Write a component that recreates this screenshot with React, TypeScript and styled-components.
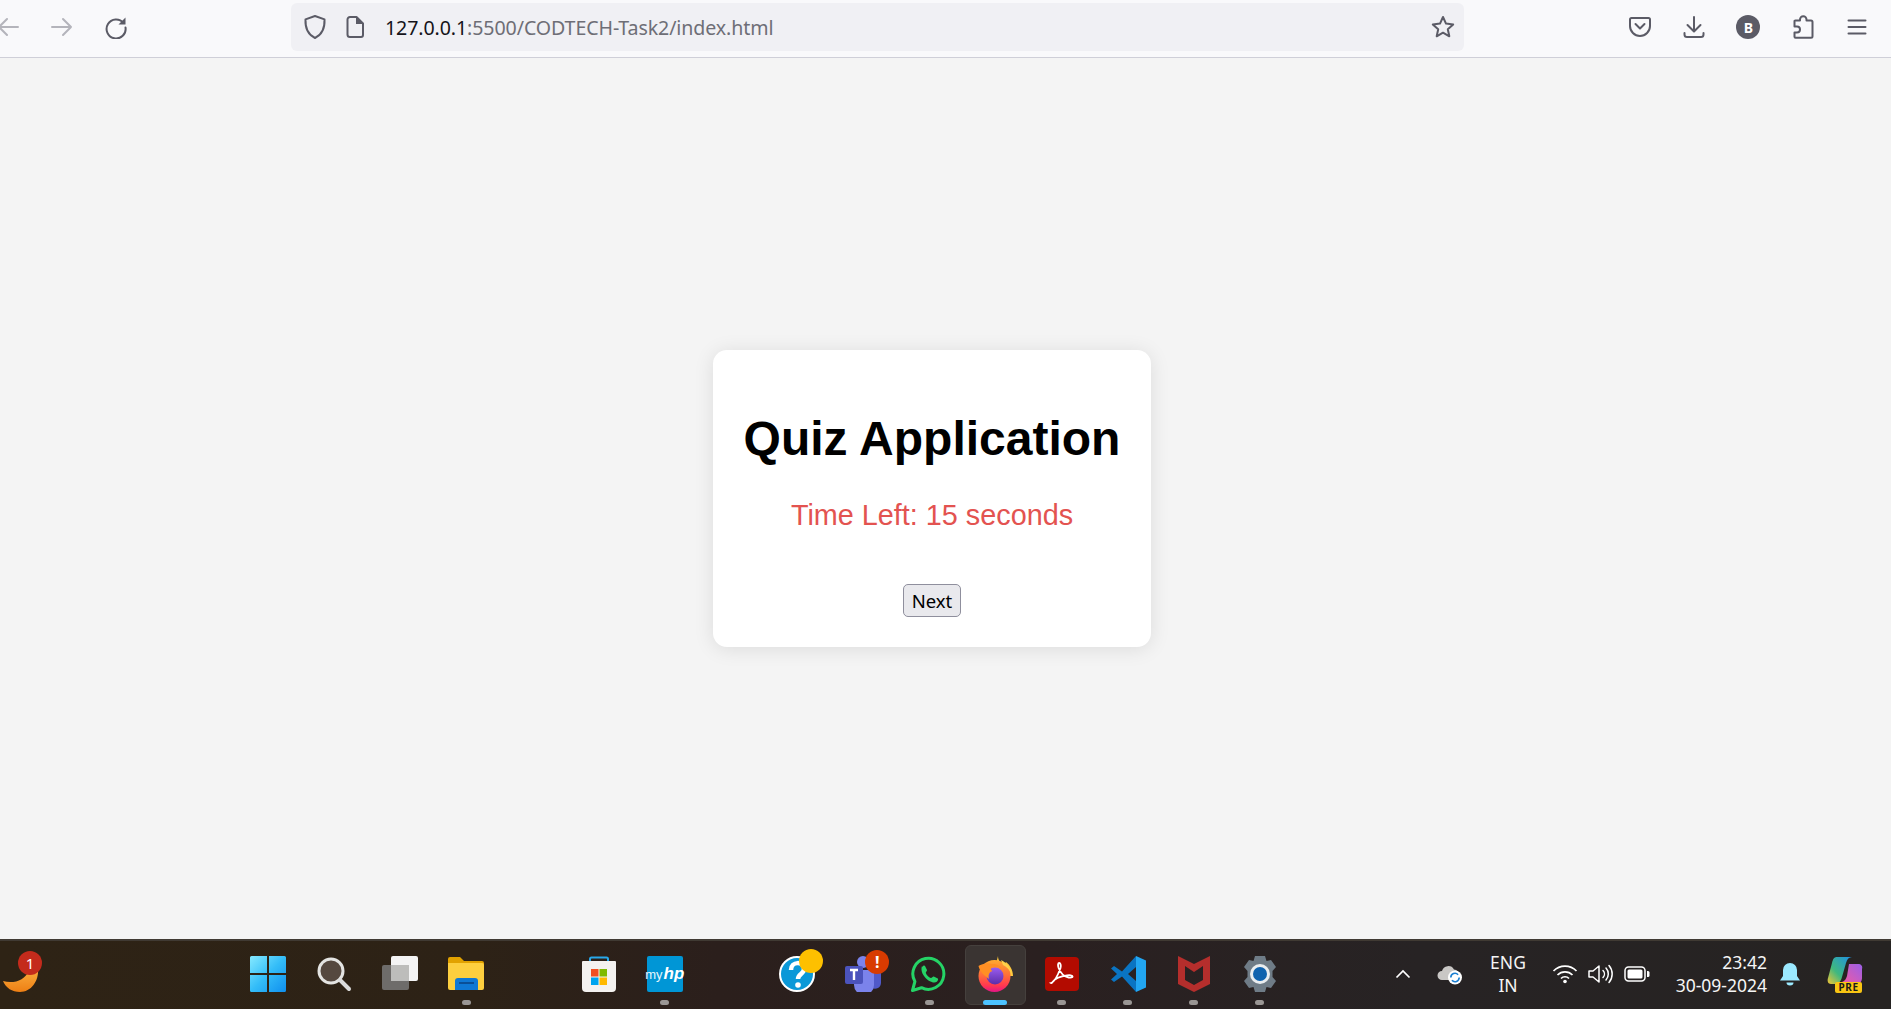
import React from "react";
import styled, { createGlobalStyle } from "styled-components";

const Global = createGlobalStyle`
  html, body { margin: 0; padding: 0; height: 100%; overflow: hidden; }
  #root { height: 100%; }
  * { box-sizing: border-box; }
`;

const Page = styled.div`
  display: flex;
  flex-direction: column;
  height: 1009px;
  background: #f4f4f4;
  font-family: "Liberation Sans", Arial, sans-serif;
`;

const Toolbar = styled.header`
  flex: 0 0 58px;
  display: flex;
  align-items: center;
  background: #f9f9fb;
  border-bottom: 1px solid #cfcfd8;
  padding-bottom: 3px;
`;

const NavSlot = styled.div<{ $w: number; $shift?: number }>`
  flex: 0 0 ${(p) => p.$w}px;
  margin-left: ${(p) => p.$shift ?? 0}px;
  display: flex;
  align-items: center;
  justify-content: center;
`;

const UrlBar = styled.div`
  flex: 0 0 1173px;
  height: 48px;
  margin-left: 163px;
  background: #f0f0f4;
  border-radius: 6px;
  display: flex;
  align-items: center;
  padding: 0 8px 0 12px;
`;

const UrlIcon = styled.span<{ $w: number }>`
  flex: 0 0 ${(p) => p.$w}px;
  display: flex;
  align-items: center;
`;

const UrlText = styled.div`
  flex: 1;
  font-family: "Noto Sans", "Open Sans", sans-serif;
  font-size: 19.6px;
  color: #6e6e76;
  white-space: nowrap;
  letter-spacing: -0.1px;
  strong { font-weight: 400; color: #15141a; }
`;

const ToolGroup = styled.div`
  flex: none;
  display: flex;
  margin-left: 149px;
`;

const ToolSlot = styled.div`
  flex: 0 0 54.2px;
  display: flex;
  align-items: center;
  justify-content: center;
`;

const Avatar = styled.div`
  width: 24px;
  height: 24px;
  border-radius: 50%;
  background: #5b5b66;
  color: #fff;
  font: 700 14px "Noto Sans", sans-serif;
  display: flex;
  align-items: center;
  justify-content: center;
`;

const Main = styled.main`
  flex: 1;
  display: flex;
  align-items: center;
  justify-content: center;
  padding-right: 27px;
`;

const Card = styled.section`
  width: 438px;
  height: 297px;
  background: #fff;
  border-radius: 14px;
  box-shadow: 0 2px 20px rgba(0, 0, 0, 0.1);
  padding: 30px;
  text-align: center;
`;

const Title = styled.h1`
  margin: 31px 0 0;
  font-size: 48px;
  line-height: 55px;
  font-weight: 700;
  color: #000;
  white-space: nowrap;
`;

const Timer = styled.p`
  margin: 33px 0 0;
  font-size: 28.8px;
  line-height: 33px;
  color: #e35350;
`;

const NextButton = styled.button`
  display: block;
  margin: 52px auto 0;
  width: 58px;
  height: 33px;
  padding: 0;
  background: #e9e9ed;
  border: 1px solid #8f8f9d;
  border-radius: 5px;
  font-family: "Noto Sans", "Open Sans", sans-serif;
  font-size: 18.5px;
  color: #000;
`;

const Taskbar = styled.footer`
  flex: 0 0 70px;
  display: flex;
  align-items: stretch;
  background: linear-gradient(90deg, #2e2315 0%, #2d2216 25%, #2b1f1c 38%, #2a2020 55%, #272324 75%, #262322 100%);
  border-top: 2px solid #403a33;
`;

const Widget = styled.div`
  flex: 0 0 235px;
  position: relative;
`;

const Badge = styled.span`
  position: absolute;
  left: 18px;
  top: 10px;
  width: 24px;
  height: 24px;
  border-radius: 50%;
  background: #c42b1c;
  color: #fff;
  font: 400 15px "Noto Sans", sans-serif;
  display: flex;
  align-items: center;
  justify-content: center;
`;

const WidgetArt = styled.div`
  position: absolute;
  left: 3px;
  top: 25px;
`;

const Slot = styled.div<{ $active?: boolean }>`
  flex: 0 0 66.13px;
  position: relative;
  display: flex;
  align-items: center;
  justify-content: center;
  padding-bottom: 2px;
  &::before {
    content: "";
    display: ${(p) => (p.$active ? "block" : "none")};
    position: absolute;
    left: 3px;
    right: 3px;
    top: 4px;
    bottom: 4px;
    border-radius: 6px;
    background: #3a3432;
    border: 1px solid #45403d;
  }
`;

const IconLayer = styled.div`
  position: relative;
  display: flex;
`;

const Pip = styled.span<{ $active?: boolean }>`
  position: absolute;
  left: 50%;
  bottom: 4px;
  width: ${(p) => (p.$active ? 24 : 9)}px;
  height: 5px;
  margin-left: ${(p) => (p.$active ? -12 : -4.5)}px;
  border-radius: 3px;
  background: ${(p) => (p.$active ? "#4cc2ff" : "#9a9694")};
`;

const Tray = styled.div`
  margin-left: auto;
  display: flex;
  padding-right: 14px;
`;

const TrayItem = styled.div<{ $w: number }>`
  flex: 0 0 ${(p) => p.$w}px;
  display: flex;
  align-items: center;
  justify-content: center;
  padding-bottom: 2px;
`;

const TrayText = styled.div<{ $align: string }>`
  width: 100%;
  font-family: "Noto Sans", "Open Sans", sans-serif;
  font-size: 17.5px;
  line-height: 23.5px;
  color: #f5f5f5;
  text-align: ${(p) => p.$align};
  white-space: nowrap;
`;

const HpTile = styled.div`
  width: 36px;
  height: 36px;
  background: #0096d6;
  border-radius: 2px;
  color: #e8f6fc;
  display: flex;
  align-items: center;
  justify-content: center;
  gap: 1px;
  font-family: "Liberation Sans", sans-serif;
  font-size: 13px;
  span { font-size: 17px; font-style: italic; font-weight: 700; color: #fff; }
`;

const CopilotWrap = styled.div`
  position: relative;
  width: 36px;
  height: 36px;
`;

const PreTag = styled.span`
  position: absolute;
  left: 8px;
  bottom: -1px;
  width: 27px;
  height: 11px;
  border-radius: 2px;
  background: #f9c513;
  color: #1a1a1a;
  font: 700 10px/11px "Noto Sans", sans-serif;
  letter-spacing: 0.6px;
  text-align: center;
`;

const TeamsWrap = styled.div`
  position: relative;
  width: 36px;
  height: 36px;
`;

const Alert = styled.span`
  position: absolute;
  right: -8px;
  top: -6px;
  width: 24px;
  height: 24px;
  border-radius: 50%;
  background: #d83b01;
  color: #fff;
  font: 700 16px/24px "Noto Sans", sans-serif;
  text-align: center;
`;

const stroke = { fill: "none", stroke: "#5b5b66", strokeWidth: 2, strokeLinecap: "round" as const, strokeLinejoin: "round" as const };

const Arrow = ({ dir }: { dir: "l" | "r" }) => (
  <svg width="24" height="24" viewBox="0 0 24 24">
    <path
      d={dir === "l" ? "M22 12H3M11 4l-8 8 8 8" : "M2 12h19M13 4l8 8-8 8"}
      fill="none"
      stroke="#b4b4bb"
      strokeWidth="2"
      strokeLinecap="round"
      strokeLinejoin="round"
    />
  </svg>
);

const Reload = () => (
  <svg width="24" height="24" viewBox="0 0 24 24">
    <path d="M19.5 8A9.5 9.5 0 1 0 21.5 12.5" {...stroke} />
    <path d="M21.5 2.5v7h-7z" fill="#5b5b66" />
  </svg>
);

const Shield = () => (
  <svg width="24" height="26" viewBox="0 0 24 26">
    <path d="M12 2l9.5 3.4c.4 8-1.6 14.8-9.5 18.6C4.100 20.200 2.100 13.400 2.500 5.400z" {...stroke} />
  </svg>
);

const PageIcon = () => (
  <svg width="20" height="24" viewBox="0 0 20 24">
    <path d="M5 2h6.500L18 8.500V20a2 2 0 0 1-2 2H5a2.500 2.500 0 0 1-2.500-2.500v-15A2.500 2.500 0 0 1 5 2z" {...stroke} />
    <path d="M11 2v7h7z" fill="#5b5b66" />
  </svg>
);

const StarIcon = () => (
  <svg width="26" height="26" viewBox="0 0 26 26">
    <path d="M13 3l3 6.600 7.200.8-5.400 4.800 1.500 7.100L13 18.700l-6.300 3.600 1.500-7.100L2.800 10.400l7.200-.8z" {...stroke} />
  </svg>
);

const PocketIcon = () => (
  <svg width="24" height="24" viewBox="0 0 24 24">
    <path d="M3.500 3h17A1.500 1.500 0 0 1 22 4.500V11a10 10 0 0 1-20 0V4.500A1.500 1.500 0 0 1 3.500 3z" {...stroke} />
    <path d="M7.500 9l4.500 4.500L16.500 9" {...stroke} />
  </svg>
);

const DownloadIcon = () => (
  <svg width="24" height="24" viewBox="0 0 24 24">
    <path d="M12 2v14M5.500 10l6.500 6.500 6.500-6.500M2.500 18v1.500A2.500 2.500 0 0 0 5 22h14a2.500 2.500 0 0 0 2.500-2.500V18" {...stroke} />
  </svg>
);

const PuzzleIcon = () => (
  <svg width="24" height="26" viewBox="0 0 24 26">
    <path d="M9 5.500V6.500H4.500a1.500 1.500 0 0 0-1 .5v5.500h2.500a3 3 0 0 1 0 6H3.500v4.300a1 1 0 0 0 1 1H20a1.500 1.500 0 0 0 1.500-1.500V8a1.500 1.500 0 0 0-1.500-1.500h-4.500v-1a3.250 3.250 0 0 0-6.500 0z" {...stroke} />
  </svg>
);

const MenuIcon = () => (
  <svg width="20" height="20" viewBox="0 0 20 20">
    <path d="M1.500 3.500h17M1.500 10h17M1.500 16.500h17" {...stroke} />
  </svg>
);

const Moon = () => (
  <svg width="36" height="26" viewBox="0 0 36 26">
    <defs>
      <linearGradient id="moon" x1="0" y1="0" x2="0" y2="1">
        <stop offset="0" stopColor="#fbb040" />
        <stop offset="1" stopColor="#ee7f14" />
      </linearGradient>
    </defs>
    <path d="M0 15c10 3 22 0 26-11 4-3 8-3 9-1 1 12-7 23-18 23C9 26 3 22 0 15z" fill="url(#moon)" />
  </svg>
);

const WinLogo = () => (
  <svg width="36" height="36" viewBox="0 0 36 36">
    <defs>
      <linearGradient id="win" x1="0" y1="0" x2="1" y2="1">
        <stop offset="0" stopColor="#86eaff" />
        <stop offset="0.5" stopColor="#34bdf8" />
        <stop offset="1" stopColor="#0f8fee" />
      </linearGradient>
    </defs>
    <path d="M1.500 0H17v17H0V1.500A1.500 1.500 0 0 1 1.500 0zM19 0h15.500A1.500 1.500 0 0 1 36 1.500V17H19zM0 19h17v17H1.500A1.500 1.500 0 0 1 0 34.500zM19 19h17v15.500a1.500 1.500 0 0 1-1.500 1.500H19z" fill="url(#win)" />
  </svg>
);

const SearchIcon = () => (
  <svg width="36" height="36" viewBox="0 0 36 36">
    <circle cx="15" cy="15" r="12" fill="#55483f" stroke="#e4e4e2" strokeWidth="3" />
    <path d="M24 24l9 9" stroke="#dcdcdc" strokeWidth="4" strokeLinecap="round" />
  </svg>
);

const TaskView = () => (
  <svg width="36" height="36" viewBox="0 0 36 36">
    <rect x="0" y="9" width="27" height="25" rx="2" fill="#6e6c6a" />
    <rect x="9" y="0" width="27" height="25" rx="2" fill="#f4f4f4" />
    <rect x="9" y="9" width="18" height="16" fill="#bdbdbb" />
  </svg>
);

const Explorer = () => (
  <svg width="36" height="34" viewBox="0 0 36 34">
    <path d="M0 2a2 2 0 0 1 2-2h10l4 4h18a2 2 0 0 1 2 2v4H0z" fill="#e2a200" />
    <path d="M0 6h34a2 2 0 0 1 2 2v23a2 2 0 0 1-2 2H2a2 2 0 0 1-2-2z" fill="#fdcf3f" />
    <path d="M7 33v-9a3 3 0 0 1 3-3h17a3 3 0 0 1 3 3v9z" fill="#0f78d4" />
    <path d="M11 26h15" stroke="#0a4f96" strokeWidth="2" />
  </svg>
);

const Store = () => (
  <svg width="36" height="36" viewBox="0 0 36 36">
    <path d="M9 7V3a1.500 1.500 0 0 1 1.500-1.500h15A1.500 1.500 0 0 1 27 3v4" fill="none" stroke="#28a8ea" strokeWidth="2" />
    <path d="M2 5h32a1 1 0 0 1 1 1v26a4 4 0 0 1-4 4H5a4 4 0 0 1-4-4V6a1 1 0 0 1 1-1z" fill="#f4f2f0" />
    <rect x="10" y="13" width="7.500" height="7.500" fill="#f25022" />
    <rect x="18.500" y="13" width="7.500" height="7.500" fill="#7fba00" />
    <rect x="10" y="21.500" width="7.500" height="7.500" fill="#00a4ef" />
    <rect x="18.500" y="21.500" width="7.500" height="7.500" fill="#ffb900" />
  </svg>
);

const HelpIcon = () => (
  <svg width="36" height="36" viewBox="0 0 36 36" overflow="visible">
    <circle cx="18" cy="18" r="17" fill="#0a98d8" stroke="#fff" strokeWidth="2" />
    <path d="M12 14c0-9 13-9 13-1 0 5-6 5-6 10" fill="none" stroke="#fff" strokeWidth="4.500" />
    <circle cx="19" cy="29" r="2.800" fill="#fff" />
    <circle cx="32" cy="5" r="12" fill="#fdc000" />
  </svg>
);

const TeamsIcon = () => (
  <svg width="36" height="36" viewBox="0 0 36 36">
    <circle cx="18" cy="6" r="6" fill="#7b83eb" />
    <circle cx="31" cy="9" r="5" fill="#5059c9" />
    <path d="M27 15h9v12a6 6 0 0 1-9 5z" fill="#5059c9" />
    <path d="M9 14h20v15a10 10 0 0 1-20 0z" fill="#7b83eb" />
    <rect x="0" y="10" width="18" height="18" rx="2" fill="#4b53bc" />
    <path d="M5 14h8M9 14v10" stroke="#fff" strokeWidth="2.400" />
  </svg>
);

const WhatsApp = () => (
  <svg width="36" height="36" viewBox="0 0 36 36">
    <path d="M1.500 34.500l2.400-9A15.500 15.500 0 1 1 10.500 31.700z" fill="none" stroke="#25d366" strokeWidth="3" strokeLinejoin="round" />
    <path d="M11 11c1-1.500 2.500-2 3-1l2 4c.3.800-1.500 2-1.200 3 1 2.500 2.700 4 5 5 1 .3 2-1.800 3-1.500l4 2c.8.600 0 2.500-1 3.300-5.500 3.500-18-7-14.800-15.800z" fill="#25d366" />
  </svg>
);

const Firefox = () => (
  <svg width="36" height="36" viewBox="0 0 36 36">
    <defs>
      <linearGradient id="ffb" x1="0.500" y1="0" x2="0.500" y2="1">
        <stop offset="0" stopColor="#ffa930" />
        <stop offset="0.5" stopColor="#ff6b3a" />
        <stop offset="0.8" stopColor="#ff3750" />
        <stop offset="1" stopColor="#e31587" />
      </linearGradient>
      <linearGradient id="ffp" x1="0.500" y1="0" x2="0.500" y2="1">
        <stop offset="0" stopColor="#9a5cf0" />
        <stop offset="1" stopColor="#5b2da8" />
      </linearGradient>
    </defs>
    <path d="M21 0c0 5 3 7 6 9l2-3c4 3 7 8 7 14H16z" fill="#ffc83d" />
    <circle cx="17.500" cy="20" r="16" fill="url(#ffb)" />
    <circle cx="18" cy="20" r="8.500" fill="url(#ffp)" />
    <path d="M1.500 10c3-2 9-4 13-2 5-.5 10 2 12.500 7-3-4-7.500-5-11-4-3 1-2.500 3-.5 4-3.500 1-4.500 4-3.500 8C8 20 3 16 1.500 10z" fill="#ff8f24" />
    <path d="M24 4c5 2 10 8 11 15-2-5-5-8-9-10z" fill="#ffd14a" />
  </svg>
);

const Acrobat = () => (
  <svg width="34" height="34" viewBox="0 0 34 34">
    <rect width="34" height="34" rx="4" fill="#b30b00" />
    <path d="M6 26c3-1 7-8 9.500-15 .8-3-.2-5-1.300-5-1.200 0-1.600 2.200-.6 5 2 5 6 9 10 9.500 2.400.3 4 0 4-1 0-1.300-3-1.500-5.500-1.100-5 .7-12 3-14.500 6.600-.8 1-.9 1.400-1.600 1z" fill="none" stroke="#fff" strokeWidth="1.800" />
  </svg>
);

const VSCode = () => (
  <svg width="36" height="36" viewBox="0 0 36 36">
    <path d="M1 12.500l3-2.500 8 5.500L26 0v11l-8 7 8 7v11L12 20.500 4 26l-3-2.500L7 18z" fill="#0a74c2" />
    <path d="M26 0l10 4.500v27L26 36z" fill="#22a6f2" />
  </svg>
);

const McAfee = () => (
  <svg width="32" height="36" viewBox="0 0 32 36">
    <path d="M0 0l16 8 16-8v28l-16 8-16-8zM7 10v14l9 5 9-5V10l-9 6z" fill="#b52e2c" fillRule="evenodd" />
  </svg>
);

const Gear = () => (
  <svg width="36" height="36" viewBox="0 0 36 36">
    <path d="M13 0h10l1.500 5 4.500-1 5 7-3.500 4 0 6 3.500 4-5 7-4.500-1L23 36H13l-1.500-5-4.500 1-5-7 3.500-4v-6L2 11l5-7 4.500 1z" fill="#6f7c87" />
    <circle cx="18" cy="18" r="10" fill="#e9edf0" />
    <circle cx="18" cy="18" r="7" fill="#0f62ae" />
  </svg>
);

const Chevron = () => (
  <svg width="16" height="10" viewBox="0 0 16 10">
    <path d="M1.500 8.500L8 2l6.500 6.500" fill="none" stroke="#fff" strokeWidth="1.700" />
  </svg>
);

const CloudSync = () => (
  <svg width="26" height="22" viewBox="0 0 26 22">
    <path d="M5 17a4.500 4.500 0 0 1 0-9 6.500 6.500 0 0 1 12-1.500A5 5 0 0 1 22 12v5z" fill="#c9c7c5" />
    <circle cx="18" cy="14.500" r="7" fill="#fff" />
    <path d="M13.800 14.500a4.200 4.200 0 0 1 7.300-2.800M22.200 14.500a4.200 4.200 0 0 1-7.300 2.800" fill="none" stroke="#1b7fd1" strokeWidth="1.600" />
  </svg>
);

const Wifi = () => (
  <svg width="26" height="20" viewBox="0 0 26 20">
    <path d="M1.500 7a16 16 0 0 1 23 0M5.500 11a10.500 10.500 0 0 1 15 0M9 14.500a5.500 5.500 0 0 1 8 0" fill="none" stroke="#fff" strokeWidth="1.700" />
    <circle cx="13" cy="17.500" r="1.800" fill="#fff" />
  </svg>
);

const Volume = () => (
  <svg width="26" height="22" viewBox="0 0 26 22">
    <path d="M1 8h4l6-5v16l-6-5H1z" fill="none" stroke="#fff" strokeWidth="1.500" strokeLinejoin="round" />
    <path d="M15 7.500a5 5 0 0 1 0 7M18 5a9 9 0 0 1 0 12M21 2.500a13 13 0 0 1 0 17" fill="none" stroke="#fff" strokeWidth="1.500" strokeLinecap="round" />
  </svg>
);

const Battery = () => (
  <svg width="26" height="16" viewBox="0 0 26 16">
    <rect x="1" y="1" width="20" height="14" rx="3.500" fill="none" stroke="#fff" strokeWidth="1.500" />
    <rect x="3.500" y="3.500" width="15" height="9" rx="1.500" fill="#fff" />
    <path d="M23 5h1a1.500 1.500 0 0 1 1.500 1.500v3A1.500 1.500 0 0 1 24 11h-1z" fill="#fff" />
  </svg>
);

const Bell = () => (
  <svg width="20" height="24" viewBox="0 0 20 24">
    <path d="M10 1a7 7 0 0 1 7 7v6l3 4.500H0L3 14V8a7 7 0 0 1 7-7z" fill="#9be9ff" />
    <path d="M6.500 20.500h7a3.500 3 0 0 1-7 0z" fill="#9be9ff" />
  </svg>
);

const Copilot = () => (
  <svg width="36" height="30" viewBox="0 0 36 30">
    <defs>
      <linearGradient id="copa" x1="0" y1="1" x2="1" y2="0">
        <stop offset="0" stopColor="#f4c534" />
        <stop offset="0.4" stopColor="#3fb87f" />
        <stop offset="1" stopColor="#1f8fe6" />
      </linearGradient>
      <linearGradient id="copb" x1="0" y1="1" x2="1" y2="0">
        <stop offset="0" stopColor="#f25aa0" />
        <stop offset="1" stopColor="#9a5fe8" />
      </linearGradient>
    </defs>
    <path d="M10 1h15c-3 0-5 2-6 6l-4 14c-1 4-3 7-7 7H4c-3 0-4-3-3-6l4-15c1-4 2-6 5-6z" fill="url(#copa)" />
    <path d="M22 8h9c3 0 5 2 4 5v9c0 3-2 6-5 6h-9c-3 0-5-1-6-2 3-1 4-3 5-6l2-12z" fill="url(#copb)" />
  </svg>
);

type Item = { icon?: React.ReactNode; pip?: boolean; active?: boolean };

const items: Item[] = [
  { icon: <WinLogo /> },
  { icon: <SearchIcon /> },
  { icon: <TaskView /> },
  { icon: <Explorer />, pip: true },
  {},
  { icon: <Store /> },
  { icon: <HpTile>my<span>hp</span></HpTile>, pip: true },
  {},
  { icon: <HelpIcon /> },
  { icon: <TeamsWrap><TeamsIcon /><Alert>!</Alert></TeamsWrap> },
  { icon: <WhatsApp />, pip: true },
  { icon: <Firefox />, pip: true, active: true },
  { icon: <Acrobat />, pip: true },
  { icon: <VSCode />, pip: true },
  { icon: <McAfee />, pip: true },
  { icon: <Gear />, pip: true },
];

export default function App() {
  return (
    <Page>
      <Global />
      <Toolbar>
        <NavSlot $w={24} $shift={-4}><Arrow dir="l" /></NavSlot>
        <NavSlot $w={84}><Arrow dir="r" /></NavSlot>
        <NavSlot $w={24}><Reload /></NavSlot>
        <UrlBar>
          <UrlIcon $w={42}><Shield /></UrlIcon>
          <UrlIcon $w={40}><PageIcon /></UrlIcon>
          <UrlText><strong>127.0.0.1</strong>:5500/CODTECH-Task2/index.html</UrlText>
          <StarIcon />
        </UrlBar>
        <ToolGroup>
          <ToolSlot><PocketIcon /></ToolSlot>
          <ToolSlot><DownloadIcon /></ToolSlot>
          <ToolSlot><Avatar>B</Avatar></ToolSlot>
          <ToolSlot><PuzzleIcon /></ToolSlot>
          <ToolSlot><MenuIcon /></ToolSlot>
        </ToolGroup>
      </Toolbar>
      <Main>
        <Card>
          <Title>Quiz Application</Title>
          <Timer>Time Left: 15 seconds</Timer>
          <NextButton>Next</NextButton>
        </Card>
      </Main>
      <Taskbar>
        <Widget>
          <WidgetArt><Moon /></WidgetArt>
          <Badge>1</Badge>
        </Widget>
        {items.map((it, i) => (
          <Slot key={i} $active={it.active}>
            {it.icon && <IconLayer>{it.icon}</IconLayer>}
            {it.pip && <Pip $active={it.active} />}
          </Slot>
        ))}
        <Tray>
          <TrayItem $w={46}><Chevron /></TrayItem>
          <TrayItem $w={48}><CloudSync /></TrayItem>
          <TrayItem $w={68}><TrayText $align="center">ENG<br />IN</TrayText></TrayItem>
          <TrayItem $w={46}><Wifi /></TrayItem>
          <TrayItem $w={26}><Volume /></TrayItem>
          <TrayItem $w={46}><Battery /></TrayItem>
          <TrayItem $w={107}><TrayText $align="right">23:42<br />30-09-2024</TrayText></TrayItem>
          <TrayItem $w={46}><Bell /></TrayItem>
          <TrayItem $w={64}>
            <CopilotWrap><Copilot /><PreTag>PRE</PreTag></CopilotWrap>
          </TrayItem>
        </Tray>
      </Taskbar>
    </Page>
  );
}
